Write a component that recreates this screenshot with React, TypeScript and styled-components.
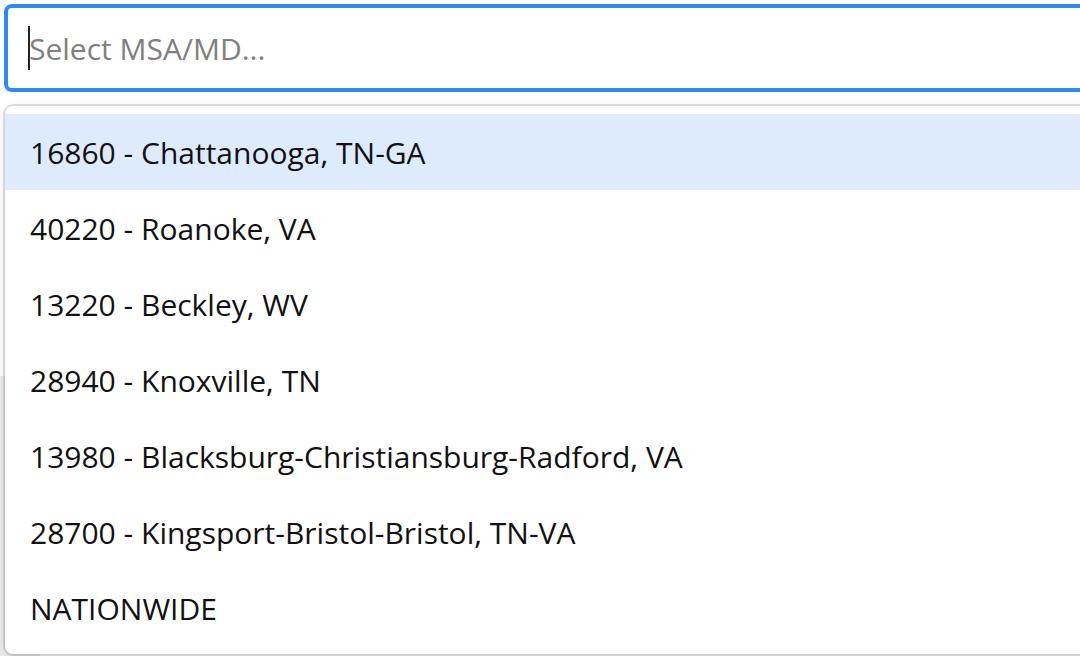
import React from "react";
import styled, { createGlobalStyle } from "styled-components";

const Global = createGlobalStyle`
  html, body { margin: 0; padding: 0; background: #fff; overflow: hidden; }
  body { font-family: "Open Sans", "Noto Sans", sans-serif; font-variant-ligatures: none; }
`;

const Page = styled.div`
  position: relative;
  width: 1080px;
  height: 656px;
  overflow: hidden;
  padding: 4px 0 0 4px;
  box-sizing: border-box;
`;

const BackdropStrip = styled.div`
  position: absolute;
  left: 0;
  top: 376px;
  width: 40px;
  height: 300px;
  background: #ececec;
`;

const Select = styled.div`
  position: relative;
  width: 1100px;
  display: flex;
  flex-direction: column;
`;

const Control = styled.div`
  height: 88px;
  box-sizing: border-box;
  border: 4px solid #2f88fb;
  border-radius: 8px;
  background: #fff;
  display: flex;
  align-items: center;
  padding-left: 20px;
`;

const Caret = styled.span`
  display: inline-block;
  width: 2px;
  height: 44px;
  background: #222;
  margin-right: -1px;
`;

const Placeholder = styled.span`
  font-size: 30px;
  color: #808080;
`;

const Menu = styled.div`
  margin-top: 14px;
  margin-left: 1px;
  height: 548px;
  box-sizing: border-box;
  background: #fff;
  border-radius: 8px;
  padding: 8px 0;
  box-shadow: 0 0 0 2px rgba(0, 0, 0, 0.12), 0 4px 14px rgba(0, 0, 0, 0.1);
  position: relative;
  z-index: 1;
  display: flex;
  flex-direction: column;
`;

const Option = styled.div<{ $active?: boolean }>`
  height: 76px;
  display: flex;
  align-items: center;
  padding-left: 25px;
  font-size: 30px;
  color: #111;
  background: ${(p) => (p.$active ? "#deebff" : "transparent")};
`;

const options = [
  "16860 - Chattanooga, TN-GA",
  "40220 - Roanoke, VA",
  "13220 - Beckley, WV",
  "28940 - Knoxville, TN",
  "13980 - Blacksburg-Christiansburg-Radford, VA",
  "28700 - Kingsport-Bristol-Bristol, TN-VA",
  "NATIONWIDE",
];

export default function App() {
  return (
    <>
      <Global />
      <Page>
        <BackdropStrip />
        <Select>
          <Control>
            <Caret />
            <Placeholder>Select MSA/MD...</Placeholder>
          </Control>
          <Menu>
            {options.map((o, i) => (
              <Option key={o} $active={i === 0}>
                {o}
              </Option>
            ))}
          </Menu>
        </Select>
      </Page>
    </>
  );
}
